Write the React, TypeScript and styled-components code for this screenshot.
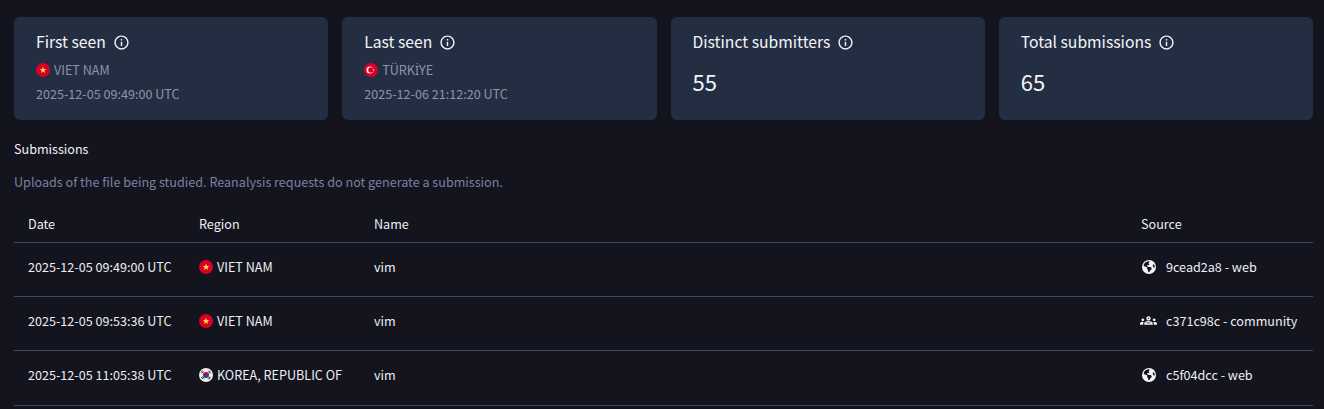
import React from "react";
import styled, { createGlobalStyle } from "styled-components";
import { MdInfoOutline, MdOutlineGroups } from "react-icons/md";
import { FaEarthAmericas } from "react-icons/fa6";

const GlobalStyle = createGlobalStyle`
  html, body {
    margin: 0;
    padding: 0;
    background: #14141f;
  }
  body {
    font-family: "Noto Sans CJK JP", "Noto Sans", sans-serif;
    color: #fff;
    overflow: hidden;
  }
`;

const Page = styled.div`
  width: 1299px;
  padding: 17px 11px 0 14px;
`;

const Cards = styled.div`
  display: grid;
  grid-template-columns: repeat(4, 1fr);
  gap: 14px;
`;

const Card = styled.div`
  height: 103px;
  box-sizing: border-box;
  padding: 13px 22px 0;
  background: #242e42;
  border-radius: 6px;
`;

const CardTitle = styled.div`
  display: flex;
  align-items: center;
  gap: 7px;
  height: 24px;
  font-size: 15.7px;
  line-height: 24px;
  color: #f4f5f8;
`;

const CardRegion = styled.div`
  display: flex;
  align-items: center;
  gap: 4px;
  height: 20px;
  margin-top: 6px;
  font-size: 12.6px;
  line-height: 20px;
  color: #8d93aa;
`;

const DottedI = styled.span`
  font-family: "Noto Sans", sans-serif;
  font-size: 12px;
`;

const CardDate = styled.div`
  margin-top: 4px;
  height: 20px;
  font-size: 12.6px;
  line-height: 20px;
  color: #8d93aa;
`;

const CardValue = styled.div`
  margin-top: 12px;
  font-size: 22px;
  line-height: 30px;
  color: #f4f5f8;
`;

const Heading = styled.div`
  margin-top: 19px;
  height: 20px;
  font-size: 12.6px;
  line-height: 20px;
  color: #f0f1f5;
`;

const Description = styled.div`
  margin-top: 13px;
  height: 20px;
  font-size: 12.6px;
  line-height: 20px;
  color: #7b81a0;
`;

const Row = styled.div<{ $header?: boolean }>`
  display: grid;
  grid-template-columns: 171px 175px 1fr 158px;
  align-items: center;
  height: ${(p) => (p.$header ? "34px" : "47.2px")};
  margin-top: ${(p) => (p.$header ? "14px" : "0")};
  padding: 0 14px ${(p) => (p.$header ? "2px" : "6px")};
  border-bottom: 1px solid #45465f;
  font-size: 12.6px;
  color: #eceef3;
`;

const Cell = styled.div`
  display: flex;
  align-items: center;
  gap: 4px;
  white-space: nowrap;
`;

const SourceCell = styled(Cell)`
  gap: 9px;
  margin-left: -1px;
`;

const SourceIcon = styled.span`
  display: inline-flex;
  width: 17px;
  justify-content: center;
  color: #f4f5f8;
`;

function VietnamFlag() {
  return (
    <svg width="14" height="14" viewBox="0 0 14 14">
      <circle cx="7" cy="7" r="7" fill="#d80027" />
      <path
        d="M7 3.6l.85 2.3 2.45.1-1.92 1.52.66 2.36L7 8.52 4.96 9.88l.66-2.36L3.7 6l2.45-.1z"
        fill="#ffda44"
      />
    </svg>
  );
}

function TurkeyFlag() {
  return (
    <svg width="14" height="14" viewBox="0 0 14 14">
      <circle cx="7" cy="7" r="7" fill="#d80027" />
      <circle cx="6" cy="7" r="3.5" fill="#fff" />
      <circle cx="6.9" cy="7" r="2.7" fill="#d80027" />
      <path d="M8.2 7l2.9-1-1.7 1 1.7 1z" fill="#fff" />
    </svg>
  );
}

function KoreaFlag() {
  return (
    <svg width="14" height="14" viewBox="0 0 14 14">
      <circle cx="7" cy="7" r="7" fill="#f0f0f0" />
      <path d="M4 7a3 3 0 0 1 6 0z" fill="#d80027" />
      <path d="M4 7a3 3 0 0 0 6 0z" fill="#0052b4" />
      <path
        d="M2 4.6l1.5-2M3 5.4l1.5-2M10 2.6l1.6 2M9.4 3.6l1.6 2M2.4 9l1.6 2.2M3.6 8.4l1.4 2.2M9 10.8l1.6-2.2M10 11.4l1.6-2.2"
        stroke="#222"
        strokeWidth="0.9"
      />
    </svg>
  );
}

const submissions = [
  { date: "2025-12-05 09:49:00 UTC", flag: <VietnamFlag />, region: "VIET NAM", source: "9cead2a8 - web", icon: <FaEarthAmericas size={14} /> },
  { date: "2025-12-05 09:53:36 UTC", flag: <VietnamFlag />, region: "VIET NAM", source: "c371c98c - community", icon: <MdOutlineGroups size={17} /> },
  { date: "2025-12-05 11:05:38 UTC", flag: <KoreaFlag />, region: "KOREA, REPUBLIC OF", source: "c5f04dcc - web", icon: <FaEarthAmericas size={14} /> },
];

export default function App() {
  return (
    <Page>
      <GlobalStyle />
      <Cards>
        <Card>
          <CardTitle>First seen <MdInfoOutline size={17} /></CardTitle>
          <CardRegion><VietnamFlag /> VIET NAM</CardRegion>
          <CardDate>2025-12-05 09:49:00 UTC</CardDate>
        </Card>
        <Card>
          <CardTitle>Last seen <MdInfoOutline size={17} /></CardTitle>
          <CardRegion><TurkeyFlag /><span>TÜRK<DottedI>{"\u0130"}</DottedI>YE</span></CardRegion>
          <CardDate>2025-12-06 21:12:20 UTC</CardDate>
        </Card>
        <Card>
          <CardTitle>Distinct submitters <MdInfoOutline size={17} /></CardTitle>
          <CardValue>55</CardValue>
        </Card>
        <Card>
          <CardTitle>Total submissions <MdInfoOutline size={17} /></CardTitle>
          <CardValue>65</CardValue>
        </Card>
      </Cards>
      <Heading>Submissions</Heading>
      <Description>Uploads of the file being studied. Reanalysis requests do not generate a submission.</Description>
      <Row $header>
        <Cell>Date</Cell>
        <Cell>Region</Cell>
        <Cell>Name</Cell>
        <Cell>Source</Cell>
      </Row>
      {submissions.map((s) => (
        <Row key={s.source}>
          <Cell>{s.date}</Cell>
          <Cell>{s.flag} {s.region}</Cell>
          <Cell>vim</Cell>
          <SourceCell><SourceIcon>{s.icon}</SourceIcon>{s.source}</SourceCell>
        </Row>
      ))}
    </Page>
  );
}
